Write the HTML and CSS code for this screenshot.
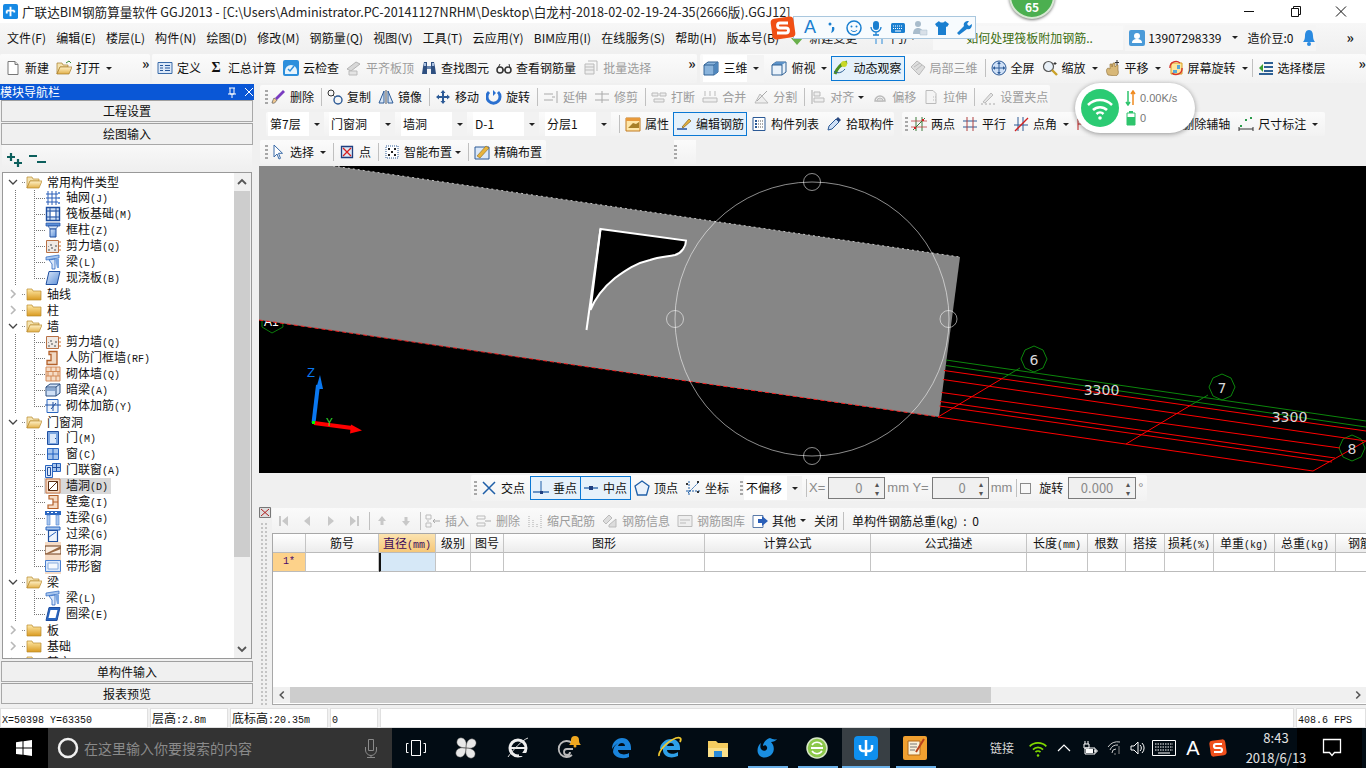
FILE: index.html
```html
<!DOCTYPE html>
<html lang="zh-CN">
<head>
<meta charset="utf-8">
<title>广联达BIM钢筋算量软件 GGJ2013</title>
<link rel="stylesheet" href="styles.css">
</head>
<body>
<svg class="sprite" xmlns="http://www.w3.org/2000/svg">
<defs>
<linearGradient id="fg" x1="0" y1="0" x2="0" y2="1"><stop offset="0" stop-color="#ffe9a8"/><stop offset="1" stop-color="#d99a20"/></linearGradient>
<linearGradient id="fo" x1="0" y1="0" x2="0" y2="1"><stop offset="0" stop-color="#fff2c8"/><stop offset="1" stop-color="#e2b04a"/></linearGradient>
<linearGradient id="bl" x1="0" y1="0" x2="1" y2="1"><stop offset="0" stop-color="#dbe8fa"/><stop offset="1" stop-color="#5b8fd8"/></linearGradient>
</defs>
<symbol id="f-c" viewBox="0 0 16 16"><path d="M1 3h5l1 2h8v9H1z" fill="url(#fg)" stroke="#b98a2c" stroke-width=".7"/></symbol>
<symbol id="f-o" viewBox="0 0 16 16"><path d="M1 3h5l1 2h6v2H4L1 14z" fill="#f4e3b0" stroke="#b98a2c" stroke-width=".7"/><path d="M4 7h12l-3 7H1z" fill="url(#fo)" stroke="#b98a2c" stroke-width=".7"/></symbol>
<symbol id="n-grid" viewBox="0 0 16 16"><path d="M1 4h12M1 8h12M1 12h12M3 1v14M7 1v14M11 1v14" stroke="#2a5fb8" fill="none"/><path d="M13 2h2v2h-2zM13 7h2v2h-2zM13 12h2v2h-2z" fill="#6d97d6"/></symbol>
<symbol id="n-raft" viewBox="0 0 16 16"><path d="M1.500 1.500h13v13h-13z" fill="#cfe0f6" stroke="#1f4fa0" stroke-width="1.400"/><path d="M5 1v14M11 1v14M1 5h14M1 11h14" stroke="#1f4fa0"/><path d="M6 6h4v4H6z" fill="#fff"/></symbol>
<symbol id="n-col" viewBox="0 0 16 16"><path d="M1 1h14v3H1z" fill="#5b8fd8" stroke="#1f4fa0" stroke-width=".7"/><path d="M3 4h10l-2 3H5z" fill="#cfe0f6" stroke="#1f4fa0" stroke-width=".7"/><path d="M5 7h6v8H5z" fill="url(#bl)" stroke="#1f4fa0"/></symbol>
<symbol id="n-wall" viewBox="0 0 16 16"><path d="M1.500 2.500h12v12h-12z" fill="#efe9e4" stroke="#b87044"/><path d="M3 11h2v2H3zM6 9h2v2H6zM9 11h2v2H9zM5 6h2v2H5zM10 7h2v2h-2zM3 8h1v1H3z" fill="#9a9a9a"/><path d="M14 4h2M14 8h2M14 12h2" stroke="#d0702c"/></symbol>
<symbol id="n-beam" viewBox="0 0 16 16"><path d="M1 3l13-2v3L1 6z" fill="#a8c6ee" stroke="#2a66c0" stroke-width=".7"/><path d="M4 6l3 4v5h3V5z" fill="#dbe8fa" stroke="#2a66c0" stroke-width=".8"/><path d="M10 5h4v9h-2z" fill="#7aa5e0"/></symbol>
<symbol id="n-slab" viewBox="0 0 16 16"><path d="M4 1.500h11L12 14.500H1z" fill="url(#bl)" stroke="#1f4fa0"/></symbol>
<symbol id="n-rf" viewBox="0 0 16 16"><path d="M4 1.500h8v13H2v-4h4v-6H4z" fill="#f1d9c4" stroke="#b4612a" stroke-width="1.300"/></symbol>
<symbol id="n-brick" viewBox="0 0 16 16"><path d="M1 1h14v14H1z" fill="#f6dcc6"/><path d="M1 1h14v14H1zM1 5.500h14M1 10h14M6 1v4.500M11 1v4.500M3 5.500V10M8 5.500V10M13 5.500V10M6 10v5M11 10v5" fill="none" stroke="#d28a58"/></symbol>
<symbol id="n-dark" viewBox="0 0 16 16"><path d="M1 5l4-3h10v9l-4 3H1z" fill="#cfe0f6" stroke="#2c4f80"/><path d="M1 5h10v9M11 5l4-3" fill="none" stroke="#2c4f80"/><path d="M2 6h8v3H2z" fill="#8aa8d0"/></symbol>
<symbol id="n-rein" viewBox="0 0 16 16"><path d="M2 1.500h11v13H2z" fill="#eef4fc" stroke="#2a66c0"/><path d="M0 7h16M6 11l5-6M8 4v9" stroke="#1f4fa0" fill="none"/></symbol>
<symbol id="n-door" viewBox="0 0 16 16"><path d="M2.500 1.500h11v13h-11z" fill="#7aa5e0" stroke="#1f4fa0"/><path d="M5 4h6v9H5z" fill="#dbe8fa"/><path d="M10 8h1v1h-1z" fill="#1f4fa0"/></symbol>
<symbol id="n-win" viewBox="0 0 16 16"><path d="M2.500 2.500h11v11h-11z" fill="#a8c6ee" stroke="#2a66c0"/><path d="M8 2v11M2 8h11" stroke="#1f5fc0"/></symbol>
<symbol id="n-dw" viewBox="0 0 16 16"><path d="M.500 3.500h7v12h-7z" fill="#dbe8fa" stroke="#2a66c0"/><path d="M7.500 1.500h8v8h-8z" fill="#a8c6ee" stroke="#2a66c0"/><path d="M11.500 1v8M7 5.500h8M2.500 5.500h3v8h-3z" fill="none" stroke="#1f4fa0"/></symbol>
<symbol id="n-hole" viewBox="0 0 16 16"><path d="M1 1h14v14H1z" fill="#f6dcc6" stroke="#c9794a"/><path d="M3.500 3.500h9v9h-9z" fill="#fff" stroke="#5c2f14"/><path d="M3.500 12.500l9-9" stroke="#5c2f14"/></symbol>
<symbol id="n-nic" viewBox="0 0 16 16"><path d="M4 1.500h9v13H3V11h5V5H4z" fill="#f6dcc6" stroke="#b4612a" stroke-width="1.200"/><path d="M8 8h5" stroke="#b4612a"/></symbol>
<symbol id="n-ll" viewBox="0 0 16 16"><path d="M0 1h16v4H0z" fill="#2a66c0"/><path d="M2 5h3v10H2zM11 5h3v10h-3z" fill="#a8c6ee" stroke="#4a80d0" stroke-width=".6"/><path d="M2 2h2v1H2zM6 2h2v1H6zM10 2h2v1h-2z" fill="#fff"/></symbol>
<symbol id="n-gl" viewBox="0 0 16 16"><path d="M1 1h14v3H1z" fill="#a8c6ee" stroke="#2a66c0"/><path d="M3.500 4.500h9v11h-9z" fill="#eef4fc" stroke="#1f4fa0" stroke-width="1.200"/><path d="M4 11l7-5" stroke="#2a66c0"/></symbol>
<symbol id="n-bd" viewBox="0 0 16 16"><path d="M0 0h16v16H0z" fill="#f6dcc6"/><path d="M0 4h16v8H0z" fill="#fbeee2" stroke="#6c3a18"/><path d="M0 12L16 4v3L3 12z" fill="#9a6a44"/></symbol>
<symbol id="n-bw" viewBox="0 0 16 16"><path d="M0 0h16v16H0z" fill="#f6dcc6"/><path d="M.500 2.500h15v11H.500z" fill="#dbe8fa" stroke="#4a80d0"/><path d="M3 5h10v6H3z" fill="#f4f8fd" stroke="#8aaee0"/></symbol>
<symbol id="n-ring" viewBox="0 0 16 16"><path d="M4 1.500h11L12 14.500H1z" fill="#2a66c0" stroke="#1f4fa0"/><path d="M5.500 4h7L10.500 12h-7z" fill="#fff"/></symbol>

<symbol id="t-new" viewBox="0 0 16 16"><path d="M3 1.500h7l3 3v10H3z" fill="#fff" stroke="#777"/><path d="M10 1.500v3h3" fill="#ddd" stroke="#777"/></symbol>
<symbol id="t-open" viewBox="0 0 16 16"><path d="M1 3h5l1 2h5v2H4L1 14z" fill="#f4e3b0" stroke="#a87c28" stroke-width=".7"/><path d="M4 7h12l-3 7H1z" fill="url(#fo)" stroke="#a87c28" stroke-width=".7"/><path d="M10 3l3-2 2 2" stroke="#3c8a3c" fill="none"/></symbol>
<symbol id="t-def" viewBox="0 0 16 16"><path d="M1 2.500h14v11H1z" fill="#dbe8f8" stroke="#3a6ba8"/><path d="M3 5h3v1H3zM3 7.500h3v1H3zM3 10h3v1H3zM8 5h5v1H8zM8 7.500h5v1H8zM8 10h5v1H8z" fill="#26569a"/></symbol>
<symbol id="t-cloud" viewBox="0 0 16 16"><rect x="0" y="0" width="16" height="16" rx="2" fill="#2d8fdc"/><path d="M2 11a5 5 0 0 1 12 0v3H2z" fill="#e8f4fc"/><path d="M5 9l2 2 4-5" stroke="#2d8fdc" stroke-width="1.500" fill="none"/></symbol>
<symbol id="t-flat" viewBox="0 0 16 16"><path d="M1 9l9-7 4 2-9 7z" fill="#d8d8d8" stroke="#b4b4b4"/><path d="M3 11h8v4H3z" fill="#e4e4e4" stroke="#bbb"/></symbol>
<symbol id="t-find" viewBox="0 0 16 16"><path d="M2 7l1-5h3v12H1zM10 2h3l1 5 1 7h-5z" fill="#2e4f80"/><path d="M6 6h4v3H6z" fill="#6a85ad"/><path d="M3 3h2v3H3zM11 3h2v3h-2z" fill="#a8bfe0"/></symbol>
<symbol id="t-view" viewBox="0 0 16 16"><circle cx="4" cy="10" r="3" fill="none" stroke="#333" stroke-width="1.500"/><circle cx="12" cy="10" r="3" fill="none" stroke="#333" stroke-width="1.500"/><path d="M7 10h2M2 8l2-4M14 8l-1-4" stroke="#333"/></symbol>
<symbol id="t-batch" viewBox="0 0 16 16"><path d="M2 4h9v10H2z" fill="#eee" stroke="#bbb"/><path d="M2 7h9M2 10h9M5 1h9v10" fill="none" stroke="#bbb"/></symbol>
<symbol id="t-3d" viewBox="0 0 16 16"><path d="M1 5l4-3h10v10l-4 3H1z" fill="#8ab4dc" stroke="#2e6094"/><path d="M1 5h10v10M11 5l4-3" fill="none" stroke="#2e6094"/><path d="M11 5l4-3v10l-4 3z" fill="#4f86bc"/></symbol>
<symbol id="t-top" viewBox="0 0 16 16"><path d="M1 5l4-3h10v10l-4 3H1z" fill="#eaf2fa" stroke="#2e6094"/><path d="M5 2h10l-4 3H1z" fill="#5c92c8"/><path d="M11 5v10M1 5h10" stroke="#2e6094"/></symbol>
<symbol id="t-orbit" viewBox="0 0 16 16"><path d="M2 14c2-6 6-10 12-12" stroke="#4c8f20" stroke-width="3" fill="none"/><ellipse cx="11" cy="4" rx="3" ry="3" fill="#c8d828"/><path d="M1 11c3 3 8 2 11-2" stroke="#2e6094" fill="none"/></symbol>
<symbol id="t-local" viewBox="0 0 16 16"><path d="M1 7l6-6 8 6-6 8z" fill="#ddd" stroke="#bbb"/><path d="M4 7l6-4M6 10l6-5" stroke="#bbb"/></symbol>
<symbol id="t-full" viewBox="0 0 16 16"><circle cx="8" cy="8" r="7" fill="#cfe0f6" stroke="#2c5a96"/><path d="M8 2v12M2 8h12" stroke="#2c5a96"/><path d="M8 2l-2 2h4zM8 14l-2-2h4zM2 8l2-2v4zM14 8l-2-2v4z" fill="#2c5a96"/></symbol>
<symbol id="t-zoom" viewBox="0 0 16 16"><circle cx="6.500" cy="6.500" r="5" fill="#e8f0f8" stroke="#555" stroke-width="1.200"/><path d="M10 10l5 5" stroke="#c9a028" stroke-width="2.400"/><path d="M13 2v3M11.500 3.500h3" stroke="#333"/></symbol>
<symbol id="t-pan" viewBox="0 0 16 16"><path d="M3 15c-2-3-2-6 0-7l2 1V4h2v3l1-4h2v4l2-2h1v5c1 3 0 5-2 6z" fill="#d8b878" stroke="#8a6a30" stroke-width=".6"/><path d="M12 0v5M10 2.500h4" stroke="#333"/></symbol>
<symbol id="t-rot" viewBox="0 0 16 16"><path d="M3 3h11v11H3z" fill="#ffe69c" stroke="#d8a020"/><path d="M5 10h4v3H5zM9 5h3v4H9z" fill="#58a8d8"/><path d="M2 8a6 6 0 0 1 10-5" stroke="#d8342c" stroke-width="1.400" fill="none"/><path d="M14 8a6 6 0 0 1-10 5" stroke="#d8342c" stroke-width="1.400" fill="none"/></symbol>
<symbol id="t-floor" viewBox="0 0 16 16"><path d="M6 3h9M6 7h9M6 11h9M1 14h14" stroke="#2e6094" stroke-width="2"/><path d="M1 8l4-4v8z" fill="#3ca030"/></symbol>
<symbol id="t-del" viewBox="0 0 16 16"><path d="M2 14c2 1 4-1 5-3L4 9c-1 2-2 4-2 5z" fill="#f0c890" stroke="#5a5a5a" stroke-width=".7"/><path d="M5 9l8-8 2 2-8 8z" fill="#7a3cc0"/></symbol>
<symbol id="t-copy" viewBox="0 0 16 16"><circle cx="4" cy="4" r="3" fill="none" stroke="#333"/><circle cx="11" cy="11" r="4" fill="none" stroke="#2c5a96" stroke-width="1.400"/><path d="M6 6l2 2" stroke="#333" stroke-dasharray="1 1"/></symbol>
<symbol id="t-mirror" viewBox="0 0 16 16"><path d="M1 14L6 2v12zM15 14L10 2v12z" fill="#d8e6f6" stroke="#2c5a96"/><path d="M8 1v14" stroke="#555"/></symbol>
<symbol id="t-move" viewBox="0 0 16 16"><path d="M8 1l2.500 3H9v3h3V5.500L15 8l-3 2.500V9H9v3h1.500L8 15l-2.500-3H7V9H4v1.500L1 8l3-2.500V7h3V4H5.500z" fill="#2c5a96"/></symbol>
<symbol id="t-rotate" viewBox="0 0 16 16"><path d="M3 3a6.500 6.500 0 1 0 9 0" fill="none" stroke="#2a70d0" stroke-width="3"/><path d="M7 1v6l3-3z" fill="#2a70d0"/></symbol>
<symbol id="t-ext" viewBox="0 0 16 16"><path d="M1 5h9M1 11h9M14 2v12M9 8h3" stroke="#aaa" fill="none"/></symbol>
<symbol id="t-trim" viewBox="0 0 16 16"><path d="M1 5h14M1 11h14M8 2v12" stroke="#aaa" fill="none"/></symbol>
<symbol id="t-break" viewBox="0 0 16 16"><path d="M1 4h6v3H1zM9 4h6v3H9zM3 10h10v3H3z" fill="#eee" stroke="#bbb"/></symbol>
<symbol id="t-merge" viewBox="0 0 16 16"><path d="M1 9h14v4H1z" fill="#eee" stroke="#bbb"/><path d="M3 2v5M8 2v5M13 2v5" stroke="#bbb"/></symbol>
<symbol id="t-split" viewBox="0 0 16 16"><path d="M2 14h13L7 5z" fill="#eee" stroke="#bbb"/><path d="M14 2L4 12" stroke="#aaa"/></symbol>
<symbol id="t-align" viewBox="0 0 16 16"><path d="M2 1v14" stroke="#aaa"/><path d="M4 3h6v4H4zM4 9h10v4H4z" fill="#eee" stroke="#bbb"/></symbol>
<symbol id="t-off" viewBox="0 0 16 16"><path d="M3 12a5 5 0 1 1 10 0z" fill="none" stroke="#bbb" stroke-width="1.500"/><path d="M5 12a3 3 0 1 1 6 0z" fill="#ddd" stroke="#bbb"/></symbol>
<symbol id="t-str" viewBox="0 0 16 16"><path d="M3 1.500h7l3 3v10H3z" fill="#f4f4f4" stroke="#bbb"/><path d="M10 8h4M10 11h4" stroke="#bbb" stroke-dasharray="1 1"/></symbol>
<symbol id="t-set" viewBox="0 0 16 16"><path d="M3 13l8-9 2 2-8 8z" fill="#e4e4e4" stroke="#bbb"/><path d="M1 15h14" stroke="#aaa" stroke-dasharray="2 2"/></symbol>
<symbol id="t-prop" viewBox="0 0 16 16"><path d="M1 2h14v13H1z" fill="#ffe6a8" stroke="#c07a20"/><path d="M1 2h14v3H1z" fill="#e89a3c"/><path d="M3 12l5-5 3 1 3-2v6z" fill="#a88028"/></symbol>
<symbol id="t-edit" viewBox="0 0 16 16"><path d="M1 13h10" stroke="#1f4fa0" stroke-width="1.500"/><path d="M6 11l7-8 2 2-8 7z" fill="#e8b43c" stroke="#7a5a20" stroke-width=".7"/></symbol>
<symbol id="t-list" viewBox="0 0 16 16"><path d="M2 1.500h12v13H2z" fill="#fff" stroke="#2c5a96"/><path d="M4 4h2v2H4zM4 7h2v2H4zM4 10h2v2H4z" fill="#2c5a96"/><path d="M7 5h5M7 8h5M7 11h5" stroke="#555" stroke-dasharray="1 1"/></symbol>
<symbol id="t-pick" viewBox="0 0 16 16"><path d="M2 14l1-4 7-7 3 3-7 7z" fill="#cfe0f6" stroke="#2c5a96"/><path d="M10 3l2-2 3 3-2 2z" fill="#2c4a80"/></symbol>
<symbol id="t-2pt" viewBox="0 0 16 16"><path d="M5 1v14M11 1v14" stroke="#3a7a3a"/><path d="M0 5h16M0 11h16" stroke="#c04040" stroke-width=".8"/><path d="M2 14L14 2" stroke="#3a7a3a"/><path d="M3 11h2v2H3zM11 3h2v2h-2z" fill="#d02020"/></symbol>
<symbol id="t-para" viewBox="0 0 16 16"><path d="M1 5h14M1 11h14" stroke="#2c5a96"/><path d="M5 1v14M11 1v14" stroke="#b04040"/></symbol>
<symbol id="t-ang" viewBox="0 0 16 16"><path d="M1 9h14M5 1v14M10 1v14" stroke="#2c5a96"/><path d="M2 15L15 2" stroke="#d02020" stroke-width="1.300"/></symbol>
<symbol id="t-red" viewBox="0 0 16 16"><path d="M2 3v11M2 8h12" stroke="#c02020"/></symbol>
<symbol id="t-dim" viewBox="0 0 16 16"><path d="M1 13h14M1 11v4M15 11v4" stroke="#333"/><path d="M2 9h2v2H2zM7 3h2v2H7zM12 1h2v2h-2z" fill="#2a9a4a"/></symbol>
<symbol id="t-sel" viewBox="0 0 16 16"><path d="M4 1v12l3-3 2 5 1.500-.7-2-5h4z" fill="#fff" stroke="#3a6ba8"/></symbol>
<symbol id="t-pt" viewBox="0 0 16 16"><path d="M2.500 2.500h11v11h-11z" fill="#dfe8f4" stroke="#1f3f80" stroke-width="1.300"/><path d="M4 4l8 8M12 4l-8 8" stroke="#d82020" stroke-width="1.300"/></symbol>
<symbol id="t-smart" viewBox="0 0 16 16"><path d="M2 2h12v12H2z" fill="#fff" stroke="#2c5a96" stroke-dasharray="1 1"/><path d="M4 4h2v2H4zM10 4h2v2h-2zM7 7h2v2H7zM4 10h2v2H4zM10 10h2v2h-2z" fill="#222"/></symbol>
<symbol id="t-prec" viewBox="0 0 16 16"><path d="M1 3h14v12H1z" fill="#dbe8f8" stroke="#2c5a96"/><path d="M3 12l9-10 3 2-9 10z" fill="#e8b43c" stroke="#8a6a20" stroke-width=".6"/></symbol>
<symbol id="s-cross" viewBox="0 0 16 16"><path d="M2 2l12 12M14 2L2 14" stroke="#1f5fa8" stroke-width="1.500"/></symbol>
<symbol id="s-perp" viewBox="0 0 16 16"><path d="M0 12h16" stroke="#1f5fa8" stroke-width="1.300"/><path d="M8 1v11" stroke="#1f5fa8"/><path d="M7 11h3v3H7z" fill="#1f3f80"/></symbol>
<symbol id="s-mid" viewBox="0 0 16 16"><path d="M1 8h14" stroke="#1f5fa8" stroke-width="1.300"/><path d="M6 6h4v4H6z" fill="#1f3f80"/></symbol>
<symbol id="s-vert" viewBox="0 0 16 16"><path d="M8 1l7 5-2.500 9h-9L1 6z" fill="#eaf2fb" stroke="#1f5fa8" stroke-width="1.300"/></symbol>
<symbol id="s-coord" viewBox="0 0 16 16"><path d="M4 1v14M1 11h14M3 13L14 2" stroke="#1f5fa8" stroke-dasharray="2 1"/><path d="M1 3h2v2H1zM12 1h2v2h-2zM12 11h2v2h-2z" fill="#333"/></symbol>
<symbol id="g-first" viewBox="0 0 16 16"><path d="M4 3h2v10H4zM13 3v10L7 8z" fill="#c8c8c8"/></symbol>
<symbol id="g-prev" viewBox="0 0 16 16"><path d="M11 3v10L5 8z" fill="#c8c8c8"/></symbol>
<symbol id="g-next" viewBox="0 0 16 16"><path d="M5 3v10l6-5z" fill="#c8c8c8"/></symbol>
<symbol id="g-last" viewBox="0 0 16 16"><path d="M3 3v10l6-5zM10 3h2v10h-2z" fill="#c8c8c8"/></symbol>
<symbol id="g-up" viewBox="0 0 16 16"><path d="M8 3l4 5H9.500v4h-3V8H4z" fill="#c8c8c8"/></symbol>
<symbol id="g-dn" viewBox="0 0 16 16"><path d="M8 13l4-5H9.500V4h-3v4H4z" fill="#c8c8c8"/></symbol>
<symbol id="g-ins" viewBox="0 0 16 16"><path d="M1 2h5v4H1zM1 10h5v4H1zM3 7v2" fill="none" stroke="#bbb"/><path d="M8 8h7M8 8l2-2M8 8l2 2" stroke="#aaa" fill="none"/></symbol>
<symbol id="g-del" viewBox="0 0 16 16"><path d="M1 3h8v3H1zM1 10h8v3H1z" fill="none" stroke="#bbb"/><path d="M9 8h6" stroke="#aaa"/></symbol>
<symbol id="g-scale" viewBox="0 0 16 16"><path d="M2 3v12M6 7v8M10 11v4M14 2v13" stroke="#aaa" stroke-dasharray="1 1"/></symbol>
<symbol id="g-info" viewBox="0 0 16 16"><path d="M1 8l6-6 3 3-6 6zM7 12l7-6v8H7z" fill="#ddd" stroke="#bbb"/></symbol>
<symbol id="g-lib" viewBox="0 0 16 16"><path d="M1 2.500h14v11H1z" fill="#eee" stroke="#bbb"/><path d="M3 7h10M3 10h6" stroke="#bbb"/></symbol>
<symbol id="g-other" viewBox="0 0 16 16"><path d="M1 2.500h10v12H1z" fill="#fff" stroke="#5a7aa8"/><path d="M6 6h4V3l6 5-6 5v-3H6z" fill="#2a5fb8"/></symbol>
<symbol id="u-user" viewBox="0 0 16 16"><rect width="16" height="16" rx="2" fill="#4a9ad8"/><circle cx="8" cy="6" r="3" fill="#fff"/><path d="M3 13c0-3 2-4 5-4s5 1 5 4z" fill="#fff"/></symbol>
<symbol id="u-win" viewBox="0 0 16 16"><path d="M0 2.200L6.500 1.300v6.300H0zM7.500 1.200L16 0v7.600H7.500zM0 8.500h6.500v6.300L0 13.900zM7.500 8.500H16V16l-8.500-1.200z" fill="#fff"/></symbol>
</svg>

<header class="titlebar">
  <svg class="app-ico" viewBox="0 0 16 16"><rect width="16" height="16" rx="2" fill="#1689e4"/><path d="M8 3v10M4 7h8" stroke="#fff" stroke-width="2"/><path d="M4 7v3M12 7v2" stroke="#fff" stroke-width="2"/></svg>
  <span class="title-text">广联达BIM钢筋算量软件 GGJ2013 - [C:\Users\Administrator.PC-20141127NRHM\Desktop\白龙村-2018-02-02-19-24-35(2666版).GGJ12]</span>
  <div class="winbtns">
    <svg viewBox="0 0 46 23"><path d="M18 11.500h10" stroke="#111"/></svg>
    <svg viewBox="0 0 46 23"><path d="M19.500 8.500h7v8h-7zM21.500 8.500v-2h7v8h-2" fill="none" stroke="#111"/></svg>
    <svg viewBox="0 0 46 23"><path d="M18 6.500l10 10M28 6.500l-10 10" stroke="#111"/></svg>
  </div>
</header>

<nav class="menubar">
  <span class="m">文件(F)</span><span class="m">编辑(E)</span><span class="m">楼层(L)</span><span class="m">构件(N)</span><span class="m">绘图(D)</span><span class="m">修改(M)</span><span class="m">钢筋量(Q)</span><span class="m">视图(V)</span><span class="m">工具(T)</span><span class="m">云应用(Y)</span><span class="m">BIM应用(I)</span><span class="m">在线服务(S)</span><span class="m">帮助(H)</span><span class="m">版本号(B)</span>
  <span class="tool"><svg class="i" viewBox="0 0 16 16"><path d="M8 15l-6-7h4V2h4v6h4z" fill="#6ab04c"/></svg><span>新建变更</span></span>
  <span class="tool"><svg class="i" viewBox="0 0 16 16"><path d="M3 3h10v4H3zM5 7v7M11 7v7" stroke="#2a8ad8" fill="#2a8ad8"/></svg><span>门户</span></span>
  <span class="notice">如何处理筏板附加钢筋..</span>
  <span class="userbox"><svg class="i"><use href="#u-user"/></svg><span>13907298339</span><i class="caret"></i><span>造价豆:0</span>
    <svg class="bell" viewBox="0 0 14 18"><path d="M7 1c3 0 4 3 4 6s1 5 2 6H1c1-1 2-3 2-6s1-6 4-6z" fill="#2a8ae0"/><circle cx="7" cy="15" r="2" fill="#2a8ae0"/></svg></span>
  <span class="more">»</span>
</nav>

<div class="tb1">
  <div class="grp g1">
    <span class="tool"><svg class="i"><use href="#t-new"/></svg><span>新建</span></span>
    <span class="tool"><svg class="i"><use href="#t-open"/></svg><span>打开</span><i class="caret"></i></span>
    <span class="more m1">»</span>
  </div>
  <div class="grp g2">
    <span class="tool"><svg class="i"><use href="#t-def"/></svg><span>定义</span></span>
    <span class="tool"><span class="sigma">Σ</span><span>汇总计算</span></span>
    <span class="tool"><svg class="i"><use href="#t-cloud"/></svg><span>云检查</span></span>
    <span class="tool off"><svg class="i"><use href="#t-flat"/></svg><span>平齐板顶</span></span>
    <span class="tool"><svg class="i"><use href="#t-find"/></svg><span>查找图元</span></span>
    <span class="tool"><svg class="i"><use href="#t-view"/></svg><span>查看钢筋量</span></span>
    <span class="tool off"><svg class="i"><use href="#t-batch"/></svg><span>批量选择</span></span>
    <span class="more m2">»</span>
  </div>
  <div class="grp g3">
    <span class="tool w3"><svg class="i"><use href="#t-3d"/></svg><span>三维</span><i class="caret cw"></i></span>
    <span class="tool n"><svg class="i"><use href="#t-top"/></svg><span>俯视</span><i class="caret"></i></span>
    <span class="tool on"><svg class="i"><use href="#t-orbit"/></svg><span>动态观察</span></span>
    <span class="tool off"><svg class="i"><use href="#t-local"/></svg><span>局部三维</span></span>
    <i class="sep"></i>
    <span class="tool"><svg class="i"><use href="#t-full"/></svg><span>全屏</span></span>
    <span class="tool"><svg class="i"><use href="#t-zoom"/></svg><span>缩放</span><i class="caret"></i></span>
    <span class="tool"><svg class="i"><use href="#t-pan"/></svg><span>平移</span><i class="caret"></i></span>
    <span class="tool n3"><svg class="i"><use href="#t-rot"/></svg><span>屏幕旋转</span><i class="caret"></i></span>
    <i class="sep"></i>
    <span class="tool"><svg class="i"><use href="#t-floor"/></svg><span>选择楼层</span></span>
    <span class="more m3">»</span>
  </div>
</div>

<main class="main">
  <aside class="nav">
    <div class="nav-head"><span>模块导航栏</span>
      <svg viewBox="0 0 30 15"><path d="M4 3h6M5 3v6h4V3M3 9h8M7 9v4" stroke="#fff" fill="none"/><path d="M20 3l8 8M28 3l-8 8" stroke="#fff"/></svg>
    </div>
    <div class="navbtn">工程设置</div>
    <div class="navbtn">绘图输入</div>
    <div class="treebar">
      <svg viewBox="0 0 42 17"><path d="M4 1v8M0 5h8M11 7v8M7 11h8" stroke="#0c5f5c" stroke-width="2.200" fill="none"/><path d="M22 4h8M30 10h9" stroke="#0c5f5c" stroke-width="2.200" fill="none"/></svg>
    </div>
    <div class="treewrap">
      <div class="tree">
        <div class="row"><svg class="chev"><path d="M3 6l4 4 4-4" /></svg><i class="dash"></i><svg class="i"><use href="#f-o"/></svg><span class="lb0">常用构件类型</span></div>
        <div class="row ch"><i class="elbow"></i><svg class="i"><use href="#n-grid"/></svg><span class="lb">轴网<b>(J)</b></span></div>
        <div class="row ch"><i class="elbow"></i><svg class="i"><use href="#n-raft"/></svg><span class="lb">筏板基础<b>(M)</b></span></div>
        <div class="row ch"><i class="elbow"></i><svg class="i"><use href="#n-col"/></svg><span class="lb">框柱<b>(Z)</b></span></div>
        <div class="row ch"><i class="elbow"></i><svg class="i"><use href="#n-wall"/></svg><span class="lb">剪力墙<b>(Q)</b></span></div>
        <div class="row ch"><i class="elbow"></i><svg class="i"><use href="#n-beam"/></svg><span class="lb">梁<b>(L)</b></span></div>
        <div class="row ch end"><i class="elbow last"></i><svg class="i"><use href="#n-slab"/></svg><span class="lb">现浇板<b>(B)</b></span></div>
        <div class="row"><svg class="chev cl"><path d="M5 4l4 4-4 4"/></svg><i class="dash"></i><svg class="i"><use href="#f-c"/></svg><span class="lb0">轴线</span></div>
        <div class="row"><svg class="chev cl"><path d="M5 4l4 4-4 4"/></svg><i class="dash"></i><svg class="i"><use href="#f-c"/></svg><span class="lb0">柱</span></div>
        <div class="row"><svg class="chev"><path d="M3 6l4 4 4-4"/></svg><i class="dash"></i><svg class="i"><use href="#f-o"/></svg><span class="lb0">墙</span></div>
        <div class="row ch"><i class="elbow"></i><svg class="i"><use href="#n-wall"/></svg><span class="lb">剪力墙<b>(Q)</b></span></div>
        <div class="row ch"><i class="elbow"></i><svg class="i"><use href="#n-rf"/></svg><span class="lb">人防门框墙<b>(RF)</b></span></div>
        <div class="row ch"><i class="elbow"></i><svg class="i"><use href="#n-brick"/></svg><span class="lb">砌体墙<b>(Q)</b></span></div>
        <div class="row ch"><i class="elbow"></i><svg class="i"><use href="#n-dark"/></svg><span class="lb">暗梁<b>(A)</b></span></div>
        <div class="row ch end"><i class="elbow last"></i><svg class="i"><use href="#n-rein"/></svg><span class="lb">砌体加筋<b>(Y)</b></span></div>
        <div class="row"><svg class="chev"><path d="M3 6l4 4 4-4"/></svg><i class="dash"></i><svg class="i"><use href="#f-o"/></svg><span class="lb0">门窗洞</span></div>
        <div class="row ch"><i class="elbow"></i><svg class="i"><use href="#n-door"/></svg><span class="lb">门<b>(M)</b></span></div>
        <div class="row ch"><i class="elbow"></i><svg class="i"><use href="#n-win"/></svg><span class="lb">窗<b>(C)</b></span></div>
        <div class="row ch"><i class="elbow"></i><svg class="i"><use href="#n-dw"/></svg><span class="lb">门联窗<b>(A)</b></span></div>
        <div class="row ch sel"><i class="elbow"></i><span class="hl"><svg class="i"><use href="#n-hole"/></svg><span class="lb">墙洞<b>(D)</b></span></span></div>
        <div class="row ch"><i class="elbow"></i><svg class="i"><use href="#n-nic"/></svg><span class="lb">壁龛<b>(I)</b></span></div>
        <div class="row ch"><i class="elbow"></i><svg class="i"><use href="#n-ll"/></svg><span class="lb">连梁<b>(G)</b></span></div>
        <div class="row ch"><i class="elbow"></i><svg class="i"><use href="#n-gl"/></svg><span class="lb">过梁<b>(G)</b></span></div>
        <div class="row ch"><i class="elbow"></i><svg class="i"><use href="#n-bd"/></svg><span class="lb">带形洞</span></div>
        <div class="row ch end"><i class="elbow last"></i><svg class="i"><use href="#n-bw"/></svg><span class="lb">带形窗</span></div>
        <div class="row"><svg class="chev"><path d="M3 6l4 4 4-4"/></svg><i class="dash"></i><svg class="i"><use href="#f-o"/></svg><span class="lb0">梁</span></div>
        <div class="row ch"><i class="elbow"></i><svg class="i"><use href="#n-beam"/></svg><span class="lb">梁<b>(L)</b></span></div>
        <div class="row ch end"><i class="elbow last"></i><svg class="i"><use href="#n-ring"/></svg><span class="lb">圈梁<b>(E)</b></span></div>
        <div class="row"><svg class="chev cl"><path d="M5 4l4 4-4 4"/></svg><i class="dash"></i><svg class="i"><use href="#f-c"/></svg><span class="lb0">板</span></div>
        <div class="row"><svg class="chev cl"><path d="M5 4l4 4-4 4"/></svg><i class="dash"></i><svg class="i"><use href="#f-c"/></svg><span class="lb0">基础</span></div>
        <div class="row"><svg class="chev cl"><path d="M5 4l4 4-4 4"/></svg><i class="dash"></i><svg class="i"><use href="#f-c"/></svg><span class="lb0">其它</span></div>
      </div>
      <div class="vscroll">
        <span class="arrow"><svg viewBox="0 0 16 16"><path d="M4 10l4-4 4 4" /></svg></span>
        <span class="vthumb"></span>
        <span class="vrest"></span>
        <span class="arrow"><svg viewBox="0 0 16 16"><path d="M4 6l4 4 4-4" /></svg></span>
      </div>
    </div>
    <div class="navbtn b1">单构件输入</div>
    <div class="navbtn b2">报表预览</div>
  </aside>
  <div class="splitter"></div>

  <section class="work">
    <div class="row2">
      <div class="grp r2g">
        <i class="grip"></i>
        <span class="tool"><svg class="i"><use href="#t-del"/></svg><span>删除</span></span><i class="sep"></i>
        <span class="tool"><svg class="i"><use href="#t-copy"/></svg><span>复制</span></span>
        <span class="tool"><svg class="i"><use href="#t-mirror"/></svg><span>镜像</span></span><i class="sep"></i>
        <span class="tool"><svg class="i"><use href="#t-move"/></svg><span>移动</span></span>
        <span class="tool"><svg class="i"><use href="#t-rotate"/></svg><span>旋转</span></span><i class="sep"></i>
        <span class="tool off"><svg class="i"><use href="#t-ext"/></svg><span>延伸</span></span>
        <span class="tool off"><svg class="i"><use href="#t-trim"/></svg><span>修剪</span></span><i class="sep"></i>
        <span class="tool off"><svg class="i"><use href="#t-break"/></svg><span>打断</span></span>
        <span class="tool off"><svg class="i"><use href="#t-merge"/></svg><span>合并</span></span>
        <span class="tool off"><svg class="i"><use href="#t-split"/></svg><span>分割</span></span><i class="sep"></i>
        <span class="tool off"><svg class="i"><use href="#t-align"/></svg><span>对齐</span><i class="caret cs"></i></span>
        <span class="tool off"><svg class="i"><use href="#t-off"/></svg><span>偏移</span></span>
        <span class="tool off"><svg class="i"><use href="#t-str"/></svg><span>拉伸</span></span><i class="sep"></i>
        <span class="tool off"><svg class="i"><use href="#t-set"/></svg><span>设置夹点</span></span>
      </div>
    </div>
    <div class="row3">
      <div class="grp r3a">
        <span class="combo c56"><span>第7层</span><i class="caret"></i></span>
        <span class="combo"><span>门窗洞</span><i class="caret"></i></span>
        <span class="combo"><span>墙洞</span><i class="caret"></i></span>
        <span class="combo"><span>D-1</span><i class="caret"></i></span>
        <span class="combo"><span>分层1</span><i class="caret"></i></span>
        <i class="sep s8"></i>
        <span class="tool n4"><svg class="i"><use href="#t-prop"/></svg><span>属性</span></span>
        <span class="tool on o4"><svg class="i"><use href="#t-edit"/></svg><span>编辑钢筋</span></span>
        <span class="tool"><svg class="i"><use href="#t-list"/></svg><span>构件列表</span></span>
        <span class="tool n0"><svg class="i"><use href="#t-pick"/></svg><span>拾取构件</span></span>
      </div>
      <div class="grp r3b">
        <i class="grip"></i>
        <span class="tool"><svg class="i"><use href="#t-2pt"/></svg><span>两点</span></span>
        <span class="tool"><svg class="i"><use href="#t-para"/></svg><span>平行</span></span>
        <span class="tool"><svg class="i"><use href="#t-ang"/></svg><span>点角</span><i class="caret"></i></span>
        <span class="tool n5"><svg class="i"><use href="#t-red"/></svg><span>三点辅轴</span><i class="caret"></i></span>
        <span class="tool n8"><svg class="i"><use href="#t-red"/></svg><span>删除辅轴</span></span>
        <span class="tool"><svg class="i"><use href="#t-dim"/></svg><span>尺寸标注</span><i class="caret"></i></span>
      </div>
    </div>
    <div class="row4">
      <div class="grp r4g">
        <i class="grip"></i>
        <span class="tool"><svg class="i"><use href="#t-sel"/></svg><span>选择</span><i class="caret"></i></span><i class="sep"></i>
        <span class="tool"><svg class="i"><use href="#t-pt"/></svg><span>点</span></span><i class="sep"></i>
        <span class="tool"><svg class="i"><use href="#t-smart"/></svg><span>智能布置</span><i class="caret cs2"></i></span><i class="sep"></i>
        <span class="tool"><svg class="i"><use href="#t-prec"/></svg><span>精确布置</span></span>
      </div>
      <div class="stub"><i class="grip"></i></div>
    </div>

    <svg class="canvas" viewBox="259 166 1107 307" xmlns="http://www.w3.org/2000/svg">
      <rect x="259" y="166" width="1107" height="307" fill="#000"/>
      <polygon points="272,311 282,317 283,327 272,333 262,327 262,317" fill="none" stroke="#0a7a0a"/>
      <text class="c-lb" x="264" y="326">A1</text>
      <polygon points="259,166 333,166 960,257 939,417 259,320" fill="#868686"/>
      <path d="M333 166L960 257" stroke="#c8c8c8" stroke-dasharray="2 3" fill="none"/>
      <path d="M259 320L939 417" stroke="#ff2020" stroke-dasharray="4 3" fill="none"/>
      <path d="M600.500 229L686 240.500C686 246 682 253 675 255 667 257 660 256 650 260 636 263 626 270 615 278 604 287 596 296 590.500 310z" fill="#000" stroke="#fff" stroke-width="2"/>
      <path d="M600.500 229L586.500 330" stroke="#fff" stroke-width="2" fill="none"/>
      <g fill="none" stroke="#fff" stroke-opacity=".55">
        <circle cx="812" cy="319" r="137"/>
        <circle cx="812" cy="182" r="8.500"/>
        <circle cx="812" cy="456" r="8.500"/>
        <circle cx="675" cy="319" r="8.500"/>
        <circle cx="948.500" cy="319" r="8.500"/>
      </g>
      <g stroke="#0c860c" fill="none">
        <path d="M946 360L1366 421M946 365.500L1366 427"/>
        <polygon points="1034,346 1043,350 1047,359 1043,368 1034,372 1025,368 1021,359 1025,350"/>
        <polygon points="1222,374 1231,378 1235,387 1231,396 1222,400 1213,396 1209,387 1213,378"/>
        <polygon points="1352,435 1361,439 1365,448 1361,457 1352,461 1343,457 1339,448 1343,439"/>
        <path d="M1003 378L1020 368M1191 405L1208 395"/>
      </g>
      <g stroke="#f00" fill="none">
        <path d="M944 370.500L1366 431M943 379.500L1366 441M941.500 392.500L1340 448M940 401.500L1335 458M939.500 406L1332 462M938 417L1313 471"/>
        <path d="M938 417L1003 378M1126 444L1191 405M1313 471L1366 441"/>
      </g>
      <text class="c-n" x="1034" y="365">6</text>
      <text class="c-n" x="1222" y="393">7</text>
      <text class="c-n" x="1352" y="454">8</text>
      <text class="c-n" x="1101.500" y="395">3300</text>
      <text class="c-n" x="1289.500" y="422">3300</text>
      <path d="M313.500 423L318 385" stroke="#0a78f0" stroke-width="4" fill="none"/>
      <path d="M320 375l3 14h-7z" fill="#0a78f0"/>
      <text class="c-z" x="307" y="377">Z</text>
      <path d="M314 423L352 428" stroke="#f00" stroke-width="4" fill="none"/>
      <path d="M362 430.500l-12 3 1-9z" fill="#f00"/>
      <rect x="312" y="421" width="3" height="3" fill="#0f0"/>
      <text class="c-y" x="326" y="426">Y</text>
    </svg>

    <div class="snap">
      <div class="grp sg">
        <i class="grip"></i>
        <span class="tool"><svg class="i"><use href="#s-cross"/></svg><span>交点</span></span>
        <span class="tool on o5"><svg class="i"><use href="#s-perp"/></svg><span>垂点</span></span>
        <span class="tool on o6"><svg class="i"><use href="#s-mid"/></svg><span>中点</span></span>
        <span class="tool"><svg class="i"><use href="#s-vert"/></svg><span>顶点</span></span>
        <span class="tool"><svg class="i"><use href="#s-coord"/></svg><span>坐标</span></span>
        <i class="grip g2x"></i>
        <span class="combo c58"><span>不偏移</span><i class="caret"></i></span>
        <i class="sep s3"></i>
        <span class="lbl">X=</span>
        <span class="spin"><span>0</span><i class="spb"><em>▴</em><em>▾</em></i></span>
        <span class="lbl">mm Y=</span>
        <span class="spin"><span>0</span><i class="spb"><em>▴</em><em>▾</em></i></span>
        <span class="lbl">mm</span>
        <i class="sep s4"></i>
        <i class="check"></i>
        <span class="rot">旋转</span>
        <span class="spin sw"><span>0.000</span><i class="spb"><em>▴</em><em>▾</em></i></span>
        <span class="lbl">°</span>
      </div>
    </div>

    <div class="lower">
      <div class="dock">
        <svg viewBox="0 0 12 12"><path d="M.500 .500h11v10h-11z" fill="#ddd" stroke="#777"/><path d="M2 2l8 7M10 2L2 9" stroke="#b02020"/></svg>
      </div>
      <div class="lowcol">
        <div class="lowbar">
          <svg class="i"><use href="#g-first"/></svg>
          <svg class="i"><use href="#g-prev"/></svg>
          <svg class="i"><use href="#g-next"/></svg>
          <svg class="i"><use href="#g-last"/></svg>
          <i class="sep"></i>
          <svg class="i"><use href="#g-up"/></svg>
          <svg class="i"><use href="#g-dn"/></svg>
          <i class="sep"></i>
          <span class="tool off"><svg class="i"><use href="#g-ins"/></svg><span>插入</span></span>
          <span class="tool off"><svg class="i"><use href="#g-del"/></svg><span>删除</span></span>
          <span class="tool off"><svg class="i"><use href="#g-scale"/></svg><span>缩尺配筋</span></span>
          <span class="tool off"><svg class="i"><use href="#g-info"/></svg><span>钢筋信息</span></span>
          <span class="tool off"><svg class="i"><use href="#g-lib"/></svg><span>钢筋图库</span></span>
          <span class="tool"><svg class="i"><use href="#g-other"/></svg><span>其他</span><i class="caret cs"></i></span>
          <span class="tool"><span>关闭</span></span><i class="sep"></i>
          <span class="sum">单构件钢筋总重(kg) : 0</span>
        </div>
        <div class="gridbox">
          <div class="gtable">
            <div class="gh"></div><div class="gh">筋号</div><div class="gh act">直径<b>(mm)</b></div><div class="gh">级别</div><div class="gh">图号</div><div class="gh">图形</div><div class="gh">计算公式</div><div class="gh">公式描述</div><div class="gh">长度<b>(mm)</b></div><div class="gh">根数</div><div class="gh">搭接</div><div class="gh">损耗<b>(%)</b></div><div class="gh">单重<b>(kg)</b></div><div class="gh">总重<b>(kg)</b></div><div class="gh clip">钢筋</div>
            <div class="gd rh">1*</div><div class="gd"></div><div class="gd cur"></div><div class="gd"></div><div class="gd"></div><div class="gd"></div><div class="gd"></div><div class="gd"></div><div class="gd"></div><div class="gd"></div><div class="gd"></div><div class="gd"></div><div class="gd"></div><div class="gd"></div><div class="gd"></div>
          </div>
          <div class="hscroll">
            <span class="harrow"><svg viewBox="0 0 16 16"><path d="M10 4L6 8l4 4"/></svg></span>
            <span class="hthumb"></span>
            <span class="hrest"></span>
            <span class="harrow"><svg viewBox="0 0 16 16"><path d="M6 4l4 4-4 4"/></svg></span>
          </div>
        </div>
      </div>
    </div>
  </section>
</main>

<footer class="status">
  <span class="st w148"><b>X=50398 Y=63350</b></span>
  <span class="st w78">层高<b>:2.8m</b></span>
  <span class="st w98">底标高<b>:20.35m</b></span>
  <span class="st w48"><b>0</b></span>
  <span class="st grow"></span>
  <span class="st w70"><b>408.6 FPS</b></span>
</footer>

<div class="taskbar">
  <span class="start"><svg class="win"><use href="#u-win"/></svg></span>
  <span class="search">
    <svg class="cortana" viewBox="0 0 22 22"><circle cx="11" cy="11" r="9" fill="none" stroke="#f0f0f0" stroke-width="2.500"/></svg>
    <span class="ph">在这里输入你要搜索的内容</span>
    <svg class="mic" viewBox="0 0 14 20"><path d="M4.500 1.500h5v11h-5zM1.500 9v3a5.500 5.500 0 0 0 11 0V9M7 17.500v2M3 19.500h8" fill="none" stroke="#8a8a8a"/></svg>
  </span>
  <span class="slot w48"><svg class="ti" viewBox="0 0 24 24"><path d="M7.500 4.500h9v15h-9zM4.500 7.500h-2v9h2M19.500 7.500h2v9h-2" fill="none" stroke="#fff"/></svg></span>
  <span class="slot w52"><svg class="ti" viewBox="0 0 24 24"><path d="M12 12C6 12 2 9 3 5s6-4 8-1 1 6 1 8zM12 12c0-6 3-10 7-9s4 6 1 8-6 1-8 1zM12 12c6 0 10 3 9 7s-6 4-8 1-1-6-1-8zM12 12c0 6-3 10-7 9s-4-6-1-8 6-1 8-1z" fill="#e8e8e8" stroke="#555" stroke-width=".5"/></svg></span>
  <span class="slot w52"><svg class="ti" viewBox="0 0 24 24"><circle cx="12" cy="12" r="8" fill="none" stroke="#eee" stroke-width="3"/><path d="M5 12h14" stroke="#eee" stroke-width="2"/><path d="M13 17h8v3h-8z" fill="#020c14"/><path d="M2 21C6 15 16 4 22 2" stroke="#ddd" fill="none"/></svg></span>
  <span class="slot w52"><svg class="ti" viewBox="0 0 24 24"><path d="M14 7a8 8 0 1 0 0 12M15 13H9a3 3 0 1 0 3 3" fill="none" stroke="#bbb" stroke-width="1.800"/><path d="M17 0a4 4 0 0 1 4 4c0 3 1 4 2 5H11c1-1 2-2 2-5a4 4 0 0 1 4-4z" fill="#f0a820"/><circle cx="17" cy="10" r="1.500" fill="#f0a820"/></svg></span>
  <span class="slot w50"><svg class="ti" viewBox="0 0 24 24"><path d="M3 13C3 6 8 2 13 2c6 0 9 5 9 10v2H9c0 4 6 6 11 3v4c-7 3-15 0-16-5 0-4 2-7 5-9-2 1-4 3-6 6zm6-3h7c0-4-6-4-7 0z" fill="#1a84dc"/></svg></span>
  <span class="slot w48"><svg class="ti" viewBox="0 0 24 24"><path d="M2 13C2 8 7 3 13 3c6 0 9 4 9 9v2H9c0 4 7 5 11 2v4c-7 3-14 1-15-5v-2zm7-3h7c0-4-6-4-7 0z" fill="#2ea0e8"/><path d="M1 20C0 16 8 6 18 2c4-1 6 0 4 4" stroke="#f0c830" stroke-width="1.800" fill="none"/></svg></span>
  <span class="slot w48"><svg class="ti" viewBox="0 0 24 24"><path d="M2 5h8l2 2h10v14H2z" fill="#f4cc60"/><path d="M2 12h20v9H2z" fill="#fbe08a"/><path d="M8 15h8v6H8z" fill="#2a8ad8"/></svg></span>
  <span class="slot w50 run"><svg class="ti" viewBox="0 0 24 24"><path d="M15 2c2 1 5 2 7 1-1 2-4 3-6 3 3 3 4 8 1 12-3 4-10 5-13 1C1 15 3 9 6 7c-1 3-1 6 1 7 2 2 6 0 5-3-1-2-2-2-4-1 0-3 3-7 7-8z" fill="#1a8ee0"/></svg></span>
  <span class="slot w50 run"><svg class="ti" viewBox="0 0 24 24"><circle cx="12" cy="12" r="10" fill="#8cc84a" stroke="#d8e8c8" stroke-width="1.500"/><path d="M6 12h12" stroke="#fff" stroke-width="2"/><path d="M7 9a6 6 0 0 1 10 0M7 15a6 6 0 0 0 10 0" stroke="#fff" fill="none" stroke-width="1.500"/></svg></span>
  <span class="slot w48 cur-app"><svg class="ti" viewBox="0 0 24 24"><rect x="0" width="24" height="24" rx="4" fill="#0f8fee"/><path d="M12 4v16M6 9v3a3 3 0 0 0 3 3h6a3 3 0 0 0 3-3V9" fill="none" stroke="#fff" stroke-width="2.500"/></svg></span>
  <span class="slot w50 run"><svg class="ti" viewBox="0 0 24 24"><rect width="24" height="24" rx="2" fill="#f0a030"/><path d="M5 5h12v14H5z" fill="#faf0d8" stroke="#b06818"/><path d="M7 8h7M7 11h7M7 14h5" stroke="#777"/><path d="M13 16L21 3" stroke="#b8421c" stroke-width="2"/></svg></span>
  <span class="tray">
    <span class="link">链接</span>
    <span class="tr w25"><svg class="ti" viewBox="0 0 24 24"><path d="M2 10a14 14 0 0 1 20 0M6 14a8 8 0 0 1 12 0M9 17a4 4 0 0 1 6 0" fill="none" stroke="#80d800" stroke-width="2"/><circle cx="12" cy="21" r="1.500" fill="#80d800"/></svg></span>
    <span class="tr w28"><svg class="ts" viewBox="0 0 16 16"><path d="M2 11l6-6 6 6" fill="none" stroke="#fff" stroke-width="1.200"/></svg></span>
    <span class="tr w24"><svg class="ts" viewBox="0 0 16 16"><path d="M3 1v3M6 1v3M2 4h5v4H2zM3 8h10v6H3zM13 10h2v2h-2z" fill="none" stroke="#fff"/><path d="M4 9h7v4H4z" fill="#fff"/></svg></span>
    <span class="tr w25"><svg class="ts" viewBox="0 0 16 16"><path d="M1 7a12 12 0 0 1 12-5M3 10a8 8 0 0 1 8-5M5 13a4 4 0 0 1 4-4" fill="none" stroke="#ccc"/><path d="M7 14h2M12 6v8" stroke="#888"/></svg></span>
    <span class="tr w21"><svg class="ts" viewBox="0 0 16 16"><path d="M1 6h3l4-4v12l-4-4H1z" fill="none" stroke="#fff"/><path d="M10 5a4 4 0 0 1 0 6M12 3a7 7 0 0 1 0 10" fill="none" stroke="#fff"/></svg></span>
    <span class="tr w32"><svg class="kb" viewBox="0 0 24 16"><path d="M.500 .500h23v15H.500z" fill="none" stroke="#fff"/><path d="M3 4h18M3 7h18M3 10h18" stroke="#fff" stroke-dasharray="1.500 1"/><path d="M6 13h12" stroke="#fff"/></svg></span>
    <span class="tr w26 ltr">A</span>
    <span class="tr w24"><svg class="ts2" viewBox="0 0 18 18"><rect x="1" y="1" width="16" height="16" rx="3" fill="#f0501c" transform="rotate(-8 9 9)"/><path d="M13 5H7a2 2 0 0 0 0 4h4a2 2 0 0 1 0 4H5" fill="none" stroke="#fff" stroke-width="2.200"/></svg></span>
    <span class="clock"><span>8:43</span><span>2018/6/13</span></span>
    <span class="tr w24n"><svg class="ts3" viewBox="0 0 20 22"><path d="M1.500 2.500h17v13h-6l-2.500 3-2.500-3h-6z" fill="none" stroke="#fff" stroke-width="1.300"/></svg></span>
  </span>
</div>

<div class="sogou">
  <svg class="sg-logo" viewBox="0 0 26 24"><rect x="1.500" y="1.500" width="23" height="21" rx="4" fill="#f04f14" transform="rotate(-8 13 12)"/><path d="M18 7h-8a2.500 2.500 0 0 0 0 5h6a2.500 2.500 0 0 1 0 5H7" fill="none" stroke="#fff" stroke-width="2.800"/></svg>
  <div class="sg-bar">
    <span class="sg-a">A</span>
    <svg viewBox="0 0 16 16"><circle cx="6" cy="4" r="1.500" fill="#1a7fd0"/><path d="M10 7c1 2 0 5-3 6 1-2 1-4 1-6z" fill="#1a7fd0"/></svg>
    <svg viewBox="0 0 16 16"><circle cx="8" cy="8" r="7" fill="none" stroke="#1a7fd0" stroke-width="1.500"/><circle cx="5.500" cy="6.500" r="1" fill="#1a7fd0"/><circle cx="10.500" cy="6.500" r="1" fill="#1a7fd0"/><path d="M5 10c1 2 5 2 6 0" stroke="#1a7fd0" fill="none"/></svg>
    <svg viewBox="0 0 16 16"><rect x="5" y="1" width="6" height="9" rx="3" fill="#1a7fd0"/><path d="M3 7a5 5 0 0 0 10 0M8 12v3M5 15h6" fill="none" stroke="#1a7fd0" stroke-width="1.300"/></svg>
    <svg viewBox="0 0 16 16"><rect x="1" y="3" width="14" height="10" rx="1.500" fill="#1a7fd0"/><path d="M3 6h10M3 8.500h10" stroke="#fff" stroke-dasharray="1 1"/><path d="M5 11h6" stroke="#fff"/></svg>
    <svg viewBox="0 0 16 16"><circle cx="6" cy="4" r="3" fill="#a8bccc"/><path d="M1 14c0-4 2-6 5-6s5 2 5 6z" fill="#a8bccc"/><path d="M8 10h7v5H8z" fill="#d8e0e8" stroke="#a8bccc" stroke-width=".5"/></svg>
    <svg viewBox="0 0 16 16"><path d="M1 4l4-3c1 2 5 2 6 0l4 3-2 3-1-.5V15H4V6.500L3 7z" fill="#1a7fd0"/></svg>
    <svg viewBox="0 0 16 16"><path d="M3 15l-2-2 7-7c-1-3 1-5 5-5l-2 3 2 2 3-2c0 4-2 6-5 5z" fill="#1a7fd0"/></svg>
  </div>
</div>

<div class="badge65"><span>65</span></div>

<div class="netwidget">
  <span class="nw-circle"><svg viewBox="0 0 28 24"><path d="M2 9a17 17 0 0 1 24 0M7 14a10 10 0 0 1 14 0M10.500 18a5 5 0 0 1 7 0" fill="none" stroke="#fff" stroke-width="2.500"/><circle cx="14" cy="22" r="1.800" fill="#fff"/></svg></span>
  <span class="nw-text">
    <span class="nw-line"><svg viewBox="0 0 12 16"><path d="M3 1v14M1 12l2 3 2-3" fill="none" stroke="#2ec46c" stroke-width="1.500"/><path d="M8 15V1M6 4l2-3 2 3" fill="none" stroke="#f08a20" stroke-width="1.500"/></svg><span>0.00K/s</span></span>
    <span class="nw-line"><svg viewBox="0 0 12 16"><path d="M4 1h4v2H4z" fill="#2ec46c"/><path d="M2 3h8v12H2z" fill="none" stroke="#2ec46c"/><path d="M2 7h8v8H2z" fill="#2ec46c"/></svg><span>0</span></span>
  </span>
</div>
</body>
</html>
```

FILE: styles.css
```css
*{box-sizing:border-box}
html,body{margin:0;padding:0}
body{width:1366px;height:768px;overflow:hidden;display:flex;flex-direction:column;position:relative;background:#f0f0f0;color:#111;font:12px/16px "Noto Sans CJK SC","Liberation Sans",sans-serif}
.sprite{display:block;width:0;height:0;overflow:hidden;flex:none}
i,em{font-style:normal}
.i{width:16px;height:16px;flex:none}

.titlebar{height:23px;flex:none;background:#fff;display:flex;align-items:center;padding-left:3px;position:relative}
.app-ico{width:15px;height:15px;margin-right:4px;flex:none}
.title-text{white-space:nowrap;font-size:12.6px;color:#222}
.winbtns{margin-left:auto;display:flex;margin-right:2px}
.winbtns svg{width:46px;height:23px}

.menubar{height:29px;flex:none;background:linear-gradient(#f7f7f7,#f0f0f0);display:flex;align-items:center;padding-left:7px;white-space:nowrap}
.m{margin-right:10px;letter-spacing:.1px}
.menubar .tool{margin-right:14px;margin-left:0}
.notice{width:190px;height:24px;margin-left:4px;padding-left:33px;line-height:24px;background:#f8f8f8;color:#3d6e12}
.userbox{display:flex;align-items:center;margin-left:2px;height:26px;padding:0 0 0 4px;background:#f5f5f5}
.userbox .i{margin-right:3px}
.userbox .caret{margin:0 9px 0 5px}
.bell{width:14px;height:18px;margin-left:9px}
.more{font-size:14px;line-height:12px;color:#222;font-weight:700;align-self:flex-start}
.menubar .more{margin:8px 0 0 30px}

.tool{display:inline-flex;align-items:center;gap:4px;margin-right:7px;white-space:nowrap;flex:none}
.tool.off{color:#9c9c9c}
.tool.on{border:1px solid #0a78d4;background:#e5f1fb;height:25px;padding:0 2px;gap:4px}
.tool.n{margin-right:7px}
.tool.n3{margin-right:4px}
.tool.n8{margin-right:8px}
.tool.w3{background:#fff;height:27px}
.caret{display:flex;align-items:center;justify-content:flex-end;width:12px;height:12px;margin-left:-4px;flex:none}
.caret::before{content:"";border-style:solid;border-width:3px 3px 0;border-color:#222 transparent transparent}
.caret.cs{width:9px;margin-left:-2px;justify-content:center}
.caret.cs2{width:9px;margin-left:-4px;justify-content:flex-end}
.caret.cw{width:17px;height:27px;margin-left:-4px;justify-content:center;background:#f4f4f4}
.sep{display:block;width:1px;height:18px;background:#c0c0c0;margin-right:5px;flex:none}
.grip{display:block;width:3px;height:15px;flex:none;background:repeating-linear-gradient(#a8a8a8 0 2px,transparent 2px 4px)}
.sigma{width:16px;text-align:center;font:700 14px "Liberation Serif",serif}

.grp{display:flex;align-items:center;background:linear-gradient(#fbfbfb,#f2f2f2);border-radius:2px}
.tb1{height:32px;flex:none;display:flex;background:#f0f0f0;align-items:center}
.g1{width:151px;height:29px;padding-left:5px;position:relative}
.g1 .more.m1{margin:3px 0 0 23px}
.g2{width:549px;height:29px;margin-left:2px;padding-left:5px;position:relative}
.more.m2{margin:3px 0 0 30px}
.g3{flex:1;height:29px;margin-left:3px;padding-left:3px}
.g3 .tool.on{margin-left:-3px;margin-right:5px;padding:0 2px 0 1px;gap:4px}
.more.m3{margin:3px 0 0 26px}

.main{height:623px;flex:none;display:flex}
.nav{width:254px;flex:none;display:flex;flex-direction:column}
.nav-head{height:16px;flex:none;background:#0a57d6;color:#fff;font-size:12px;padding-left:0;display:flex;align-items:center;justify-content:space-between}
.nav-head svg{width:30px;height:15px;margin-right:-1px}
.navbtn{height:22px;flex:none;margin:0 1px 1px;text-align:center;line-height:20px;background:#f0f0f0;border:1px solid #a8a8a8;border-top-color:#a0a0a0;font-size:12px}
.navbtn.b1{margin-top:2px;height:21px;line-height:19px}
.navbtn.b2{height:21px;line-height:19px}
.treebar{height:27px;flex:none;margin:-1px 2px 0 2px;background:linear-gradient(#f8f8f8,#efefef);padding:7px 0 0 5px}
.treebar svg{display:block;width:42px;height:17px}
.treewrap{height:487px;flex:none;margin:0 2px;background:#fff;border:1px solid #999;display:flex;overflow:hidden}
.tree{flex:1;min-width:0;padding-top:1px;overflow:hidden}
.row{height:16px;display:flex;align-items:center;white-space:nowrap;padding-left:3px}
.row.ch{padding-left:31px;background:repeating-linear-gradient(#777 0 1px,transparent 1px 2px) 12px 0/1px 100% no-repeat}
.chev{width:14px;height:16px;flex:none;fill:none;stroke:#444;stroke-width:1.300}
.chev.cl{stroke:#b8b8b8;stroke-width:1.600}
.dash{width:3px;height:1px;margin-left:2px;margin-right:1px;flex:none;background:repeating-linear-gradient(90deg,#888 0 1px,transparent 1px 2px)}
.lb0{margin-left:5px}
.lb{margin-left:5px}
.lb b,.gh b{font:400 10px/16px "Liberation Mono",monospace}
.elbow{display:block;width:11px;height:16px;flex:none;background-image:repeating-linear-gradient(#777 0 1px,transparent 1px 2px),repeating-linear-gradient(90deg,#777 0 1px,transparent 1px 2px);background-size:1px 100%,100% 1px;background-position:0 0,0 8px;background-repeat:no-repeat}
.elbow.last{background-size:1px 9px,100% 1px}
.hl{display:flex;align-items:center;background:#d9d9d9;height:16px;padding-right:3px;margin-left:-1px}
.hl .i{margin-left:1px}
.vscroll{width:17px;flex:none;display:flex;flex-direction:column;background:#f0f0f0;border-right:1px solid transparent}
.arrow{height:18px;flex:none;display:flex;align-items:center;justify-content:center}
.arrow svg{width:16px;height:16px;fill:none;stroke:#555;stroke-width:1.800}
.vthumb{height:366px;background:#cdcdcd;flex:none}
.vrest{flex:1}

.splitter{width:5px;flex:none;background:#f0f0f0}
.work{flex:1;min-width:0;display:flex;flex-direction:column}
.row2{height:26px;flex:none;display:flex;padding:1px 0 1px 1px}
.r2g{height:24px;padding-left:5px;width:790px}
.grip{margin-right:2px}
.row3{height:28px;flex:none;display:flex;padding:2px 0 2px 7px}
.r3a{width:632px;padding-left:2px;background:linear-gradient(#fbfbfb,#f2f2f2)}
.combo{width:66px;height:24px;background:#fff;display:flex;align-items:center;justify-content:space-between;padding-left:2px;margin-right:6px;flex:none}
.combo .caret{width:15px;height:24px;margin:0;background:#f2f2f2;justify-content:center}
.combo.c56{width:56px;margin-right:5px}
.combo.c58{width:58px;margin-right:4px}
.sep.s8{margin-left:2px;margin-right:5px}
.tool.n4{margin-right:4px}
.tool.on.o4{margin-right:4px;height:24px}
.tool.n0{margin-right:0}
.r3b{flex:1;margin-left:8px;padding-left:4px;margin-right:48px}
.r3b .grip{margin-right:3px;margin-left:-1px}
.tool.n5{margin-right:6px}
.row4{height:28px;flex:none;display:flex;padding:2px 0 2px 1px}
.r4g{width:286px;padding-left:5px;height:24px}
.stub{margin-left:128px;display:flex;align-items:center;width:22px;background:linear-gradient(#fbfbfb,#f2f2f2)}
.canvas{display:block;width:1107px;height:307px;flex:none}
.c-lb{font:12px "Liberation Sans",sans-serif;fill:#fff}
.c-n{font:14px "DejaVu Sans",sans-serif;fill:#d8d8d8;text-anchor:middle}
.c-z{font:13px "Liberation Sans",sans-serif;fill:#0a78f0}
.c-y{font:10px "Liberation Sans",sans-serif;fill:#30e030}

.snap{height:32px;flex:none;padding:2px 0 0 212px}
.sg{height:26px;width:676px;padding-left:3px}
.sg>.grip:first-child{margin-right:4px}
.sg .tool.on{height:24px;padding:0 3px 0 2px}
.tool.on.o5{margin:0;margin-left:-2px;padding-right:3px}
.tool.on.o6{margin:0 3px 0 0;margin-left:-1px;padding:0 3px 0 2px}
.grip.g2x{margin:0 1px 0 4px}
.sep.s3{margin:0 2px 0 0}
.sep.s4{margin:0 3px 0 1px}
.lbl{font:13px/16px "Liberation Sans",sans-serif;color:#8a8a8a;margin-right:3px;white-space:pre}
.spin{width:57px;height:22px;flex:none;margin-right:2px;border:1px solid #7a7a7a;background:#f0f0f0;color:#8a8a8a;display:flex;align-items:center;justify-content:flex-end;font-size:13px}
.spin.sw{width:68px}
.spb{display:flex;flex-direction:column;width:14px;margin-left:8px;font-size:8px;line-height:9px;text-align:center;color:#555}
.check{display:block;width:11px;height:11px;margin-right:8px;border:1px solid #8a8a8a;background:#f8f8f8;flex:none}
.rot{margin-right:5px}

.lower{flex:1;min-height:0;display:flex}
.dock{width:13px;flex:none;padding-top:2px;display:flex;flex-direction:column}
.dock svg{display:block;width:12px;height:12px;flex:none}
.dock::after{content:"";flex:1;width:8px;margin:4px 0 0 2px;background:radial-gradient(circle at 1px 1px,#c4c4c4 1px,transparent 1.200px) 0 0/4px 4px}
.lowcol{flex:1;min-width:0;display:flex;flex-direction:column;padding-top:3px}
.lowbar{height:25px;flex:none;display:flex;align-items:center;padding-left:3px;background:linear-gradient(#fafafa,#f2f2f2);white-space:nowrap}
.lowbar>.i{margin-right:8px}
.lowbar .tool.off{margin-right:7px}
.lowbar .sep{margin:0 4px 0 -2px}
.sum{margin-left:4px;word-spacing:3px}
.gridbox{height:172px;flex:none;border:1px solid #a8a8a8;border-right:0;background:#fff;display:flex;flex-direction:column}
.gtable{flex:1;min-height:0;display:grid;grid-template-columns:33px 73px 57px 35px 33px 201px 166px 156px 61px 38px 39px 49px 61px 61px 31px;grid-template-rows:19px 19px;align-content:start;overflow:hidden}
.gh{background:linear-gradient(#fff,#ececec);border-right:1px solid #c4c4c4;border-bottom:1px solid #bbb;text-align:center;line-height:18px;white-space:nowrap;overflow:hidden}
.gh.act{background:linear-gradient(#fbe3b0,#f6c778);color:#3c0a5a}
.gh.clip{text-align:left;padding-left:12px}
.gd{border-right:1px solid #c4c4c4;border-bottom:1px solid #bbb;background:#fff}
.gd.rh{background:#fdd28a;color:#4a0a6a;text-align:center;font:10px/18px "Liberation Mono",monospace}
.gd.cur{background:#d6e8f7;border-left:2px solid #111}
.hscroll{height:16px;flex:none;display:flex;background:#f0f0f0;margin-bottom:1px}
.harrow{width:17px;flex:none;display:flex;align-items:center;justify-content:center}
.harrow svg{width:14px;height:14px;fill:none;stroke:#555;stroke-width:1.800}
.hthumb{width:701px;background:#cdcdcd;flex:none}
.hrest{flex:1}

.status{height:21px;flex:none;display:flex;padding-top:1px;gap:2px;background:#f0f0f0}
.st{display:block;height:20px;background:#fff;border:1px solid #e0e0e0;padding-left:1px;line-height:18px;white-space:nowrap;overflow:hidden;flex:none}
.st b{font:400 10px/18px "Liberation Mono",monospace}
.w148{width:148px}.w78{width:78px}.w98{width:98px}.w48{width:48px}.w70{width:70px;margin-left:0}
.st.grow{flex:1}

.taskbar{height:40px;flex:none;display:flex;background:linear-gradient(90deg,#020c14 0 1297px,#000 1297px 1362px,#020c14 1362px)}
.start{width:48px;background:#000;display:flex;align-items:center;justify-content:center;flex:none}
.win{width:16px;height:16px}
.search{width:344px;flex:none;background:#333;display:flex;align-items:center;padding-left:9px}
.cortana{width:22px;height:22px;flex:none}
.ph{margin-left:5px;font-size:14px;color:#8a8a8a;white-space:nowrap}
.mic{width:14px;height:20px;margin-left:auto;margin-right:14px}
.slot{display:flex;align-items:center;justify-content:center;height:40px;flex:none;position:relative}
.slot.w48{width:48px}.slot.w50{width:50px}.slot.w52{width:52px}
.ti{width:24px;height:24px;overflow:visible}
.cur-app{background:#383f44;box-shadow:inset 0 -2px #6ab0e8}
.run::after{content:"";position:absolute;left:6px;right:4px;bottom:0;height:2px;background:#6ab0e8}
.tray{display:flex;align-items:center;flex:1;height:40px;padding-left:50px;color:#ddd}
.link{width:35px;flex:none;font-size:12px;color:#d8d8d8}
.tr{display:flex;align-items:center;justify-content:center;flex:none;height:40px}
.tr.w25{width:25px}.tr.w28{width:28px}.tr.w24{width:24px}.tr.w21{width:21px}.tr.w32{width:32px}.tr.w26{width:26px}
.tr .ti{width:20px;height:20px}
.ts{width:16px;height:16px}
.ts2{width:18px;height:18px}
.ts3{width:20px;height:22px}
.kb{width:24px;height:16px}
.ltr{font:20px "Liberation Sans",sans-serif;color:#fff}
.clock{width:92px;flex:none;display:flex;flex-direction:column;align-items:center;font-size:13px;line-height:20px;color:#e4e4e4}
.tr.w24n{width:20px}

.sogou{position:absolute;left:770px;top:16px;width:206px;height:24px;display:flex}
.sg-logo{width:26px;height:24px;flex:none;position:relative;z-index:1}
.sg-bar{margin-left:-3px;flex:1;height:23px;background:#f7fbfe;border:1px solid #a9c7de;display:flex;align-items:center;padding-left:8px;gap:6px}
.sg-bar svg{width:16px;height:16px;flex:none}
.sg-a{width:16px;text-align:center;font:18px "Liberation Sans",sans-serif;color:#1a7fd0}

.badge65{position:absolute;left:1009px;top:-27px;width:46px;height:46px;border-radius:50%;background:#4caf50;border:2px solid #d8e8d4;box-shadow:0 1px 3px #777;display:flex;align-items:flex-end;justify-content:center;color:#fff;font-size:12px;font-weight:700;line-height:14px;padding-bottom:3px}

.netwidget{position:absolute;left:1075px;top:83px;width:120px;height:50px;border-radius:25px;background:#fff;box-shadow:0 1px 5px rgba(0,0,0,.4);display:flex;align-items:center;padding-left:6px}
.nw-circle{width:38px;height:38px;border-radius:50%;background:#2bcb73;display:flex;align-items:center;justify-content:center;flex:none}
.nw-circle svg{width:28px;height:24px}
.nw-text{display:flex;flex-direction:column;gap:4px;margin-left:6px}
.nw-line{display:flex;align-items:center;gap:3px;font:11px/16px "Liberation Sans",sans-serif;color:#777}
.nw-line svg{width:12px;height:16px}
```
